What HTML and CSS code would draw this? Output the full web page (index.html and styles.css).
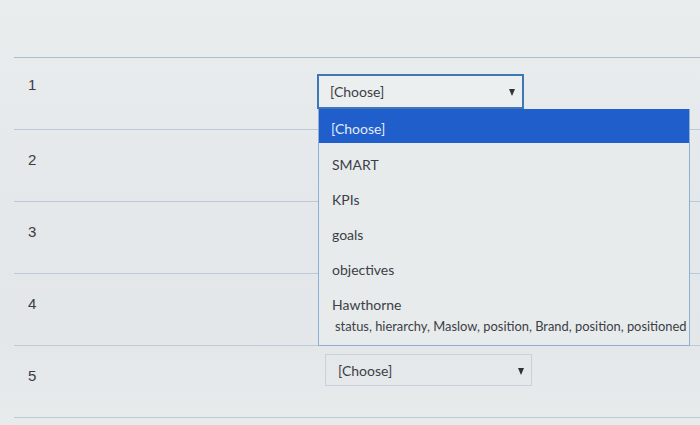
FILE: index.html
```html
<!DOCTYPE html>
<html>
<head>
<meta charset="utf-8">
<link rel="stylesheet" href="styles.css">
</head>
<body>
<div class="page">
  <div class="table">
    <div class="row">
      <div class="num">1</div>
      <div class="cell">
        <div class="select-wrap">
          <div class="select focus"><span>[Choose]</span><span class="arrow"></span></div>
          <ul class="menu">
            <li class="active">[Choose]</li>
            <li>SMART</li>
            <li>KPIs</li>
            <li>goals</li>
            <li>objectives</li>
            <li>Hawthorne</li>
            <li class="last">status, hierarchy, Maslow, position, Brand, position, positioned</li>
          </ul>
        </div>
      </div>
    </div>
    <div class="row">
      <div class="num">2</div>
      <div class="cell"></div>
    </div>
    <div class="row">
      <div class="num">3</div>
      <div class="cell"></div>
    </div>
    <div class="row">
      <div class="num">4</div>
      <div class="cell"></div>
    </div>
    <div class="row">
      <div class="num">5</div>
      <div class="cell"><div class="select low"><span>[Choose]</span><span class="arrow"></span></div></div>
    </div>
  </div>
</div>
</body>
</html>
```

FILE: styles.css
```css
html, body {
  margin: 0;
  padding: 0;
}
body {
  width: 700px;
  height: 425px;
  overflow: hidden;
  background: linear-gradient(180deg, #e9edee 0%, #e4e8ea 45%, #e3e7e9 80%, #e8ebec 100%);
  font-family: "Lato", "Liberation Sans", sans-serif;
  color: #3b4046;
}
.page {
  padding-top: 57px;
  padding-left: 14px;
}
.table {
  border-top: 1px solid #aebdcd;
}
.row {
  display: flex;
  height: 71px;
  border-bottom: 1px solid #bccad8;
}
.num {
  width: 289px;
  padding-left: 14px;
  padding-top: 21px;
  font-family: "Liberation Sans", "Arial", sans-serif;
  font-size: 15px;
  line-height: 18px;
  color: #3a3d42;
}
.row:first-child .num {
  padding-top: 18px;
}
.cell {
  padding-top: 16px;
}
.select-wrap {
  position: relative;
}
.select {
  box-sizing: border-box;
  width: 207px;
  height: 35px;
  border: 1px solid #b8c4cf;
  background: #eceff0;
  display: flex;
  align-items: center;
  justify-content: space-between;
  padding: 0 7px 0 12px;
  font-size: 14px;
  color: #3b4046;
}
.select.focus {
  border: 2px solid #3f77b6;
  padding-left: 11px;
}
.select.low {
  margin-top: -8px;
  margin-left: 8px;
  height: 32px;
  border-color: #c9d2da;
  background: transparent;
}
.arrow {
  width: 0;
  height: 0;
  border-left: 3.5px solid transparent;
  border-right: 3.5px solid transparent;
  border-top: 7px solid #2f3338;
  margin-top: 2px;
}
.menu {
  position: absolute;
  z-index: 5;
  top: 35px;
  left: 1px;
  box-sizing: border-box;
  width: 372px;
  height: 237px;
  margin: 0;
  padding: 0;
  list-style: none;
  border: 1px solid #8eaed3;
  border-top: none;
  background: #e8ebec;
  overflow: hidden;
}
.menu li {
  height: 35px;
  line-height: 43px;
  padding-left: 13px;
  font-size: 14px;
  color: #3b4046;
  white-space: nowrap;
}
.menu li.active {
  height: 34px;
  line-height: 40px;
  background: #1f5ecb;
  color: #e3ebf7;
  padding-left: 12px;
}
.menu li.last {
  height: 26px;
  line-height: 16px;
  font-size: 12.9px;
  padding-left: 16px;
}
```
